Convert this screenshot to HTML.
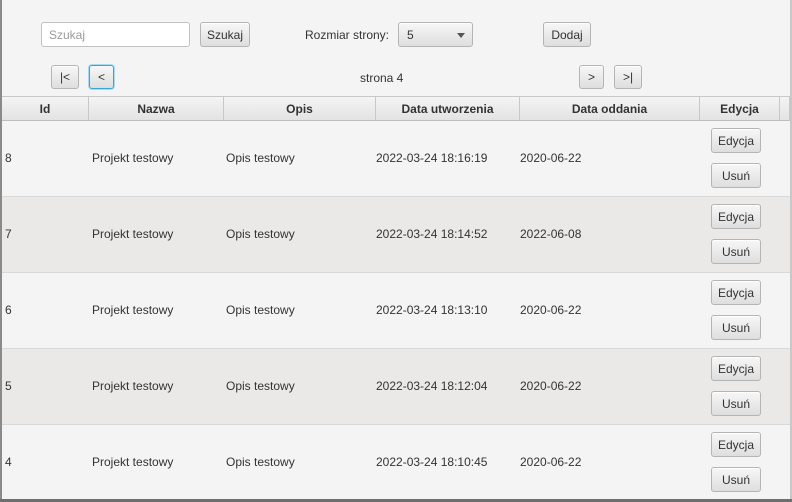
<!DOCTYPE html>
<html><head><style>
*{margin:0;padding:0;box-sizing:border-box}
body{width:792px;height:502px;background:#f4f4f4;font-family:"Liberation Sans",sans-serif;font-size:12px;color:#333;position:relative;overflow:hidden}
.a{position:absolute}
.btn{position:absolute;border:1px solid #b5b5b5;border-radius:3px;background:linear-gradient(#f7f7f7,#dedede);font-size:12px;color:#333;display:flex;align-items:center;justify-content:center;box-shadow:inset 0 1px 0 #fff}
.hdr{position:absolute;top:96px;height:25px;background:linear-gradient(#f4f4f4,#e3e3e3);border-right:1px solid #c8c8c8;border-bottom:1px solid #bdbdbd;border-top:1px solid #c8c8c8;font-weight:bold;display:flex;align-items:center;justify-content:center;color:#333}
.row{position:absolute;left:2px;width:788px;height:76px;border-bottom:1px solid #d8d8d8}
.c{position:absolute;top:30px;font-size:12px;color:#333}
</style></head><body>
<div class="a" style="left:0;top:0;width:2px;height:502px;background:#8a8a8a"></div>
<div class="a" style="left:790px;top:0;width:2px;height:502px;background:#c8c8c8"></div>
<div class="a" style="left:41px;top:22px;width:149px;height:25px;background:#fff;border:1px solid #c2c2c2;border-radius:3px;color:#9a9a9a;padding:5px 7px">Szukaj</div>
<div class="btn" style="left:200px;top:22px;width:50px;height:25px">Szukaj</div>
<div class="a" style="left:305px;top:28px">Rozmiar strony:</div>
<div class="btn" style="left:398px;top:22px;width:75px;height:25px;justify-content:flex-start;padding-left:8px">5<span style="position:absolute;left:58px;top:10px;border-left:4px solid transparent;border-right:4px solid transparent;border-top:5px solid #555"></span></div>
<div class="btn" style="left:543px;top:22px;width:48px;height:25px">Dodaj</div>
<div class="btn" style="left:51px;top:65px;width:28px;height:24px">|&lt;</div>
<div class="btn" style="left:89px;top:65px;width:25px;height:24px;border:1px solid #3aa6d8;box-shadow:0 0 0 1px #a6dbf1">&lt;</div>
<div class="a" style="left:360px;top:71px">strona 4</div>
<div class="btn" style="left:579px;top:65px;width:25px;height:24px">&gt;</div>
<div class="btn" style="left:614px;top:65px;width:28px;height:24px">&gt;|</div>
<div class="hdr" style="left:2px;width:87px">Id</div>
<div class="hdr" style="left:89px;width:135px">Nazwa</div>
<div class="hdr" style="left:224px;width:152px">Opis</div>
<div class="hdr" style="left:376px;width:144px">Data utworzenia</div>
<div class="hdr" style="left:520px;width:180px">Data oddania</div>
<div class="hdr" style="left:700px;width:80px">Edycja</div>
<div class="hdr" style="left:780px;width:10px"></div>

<div class="row" style="top:121px;background:#f4f4f4"><span class="c" style="left:3px">8</span><span class="c" style="left:90px">Projekt testowy</span><span class="c" style="left:224px">Opis testowy</span><span class="c" style="left:374px">2022-03-24 18:16:19</span><span class="c" style="left:518px">2020-06-22</span><div class="btn" style="left:709px;top:7px;width:50px;height:25px">Edycja</div><div class="btn" style="left:709px;top:42px;width:50px;height:25px">Usuń</div></div>
<div class="row" style="top:197px;background:#eae9e7"><span class="c" style="left:3px">7</span><span class="c" style="left:90px">Projekt testowy</span><span class="c" style="left:224px">Opis testowy</span><span class="c" style="left:374px">2022-03-24 18:14:52</span><span class="c" style="left:518px">2022-06-08</span><div class="btn" style="left:709px;top:7px;width:50px;height:25px">Edycja</div><div class="btn" style="left:709px;top:42px;width:50px;height:25px">Usuń</div></div>
<div class="row" style="top:273px;background:#f4f4f4"><span class="c" style="left:3px">6</span><span class="c" style="left:90px">Projekt testowy</span><span class="c" style="left:224px">Opis testowy</span><span class="c" style="left:374px">2022-03-24 18:13:10</span><span class="c" style="left:518px">2020-06-22</span><div class="btn" style="left:709px;top:7px;width:50px;height:25px">Edycja</div><div class="btn" style="left:709px;top:42px;width:50px;height:25px">Usuń</div></div>
<div class="row" style="top:349px;background:#eae9e7"><span class="c" style="left:3px">5</span><span class="c" style="left:90px">Projekt testowy</span><span class="c" style="left:224px">Opis testowy</span><span class="c" style="left:374px">2022-03-24 18:12:04</span><span class="c" style="left:518px">2020-06-22</span><div class="btn" style="left:709px;top:7px;width:50px;height:25px">Edycja</div><div class="btn" style="left:709px;top:42px;width:50px;height:25px">Usuń</div></div>
<div class="row" style="top:425px;background:#f4f4f4;border-bottom:none"><span class="c" style="left:3px">4</span><span class="c" style="left:90px">Projekt testowy</span><span class="c" style="left:224px">Opis testowy</span><span class="c" style="left:374px">2022-03-24 18:10:45</span><span class="c" style="left:518px">2020-06-22</span><div class="btn" style="left:709px;top:7px;width:50px;height:25px">Edycja</div><div class="btn" style="left:709px;top:42px;width:50px;height:25px">Usuń</div></div>
<div class="a" style="left:0;top:499px;width:792px;height:3px;background:#6e6e6e"></div>
</body></html>
